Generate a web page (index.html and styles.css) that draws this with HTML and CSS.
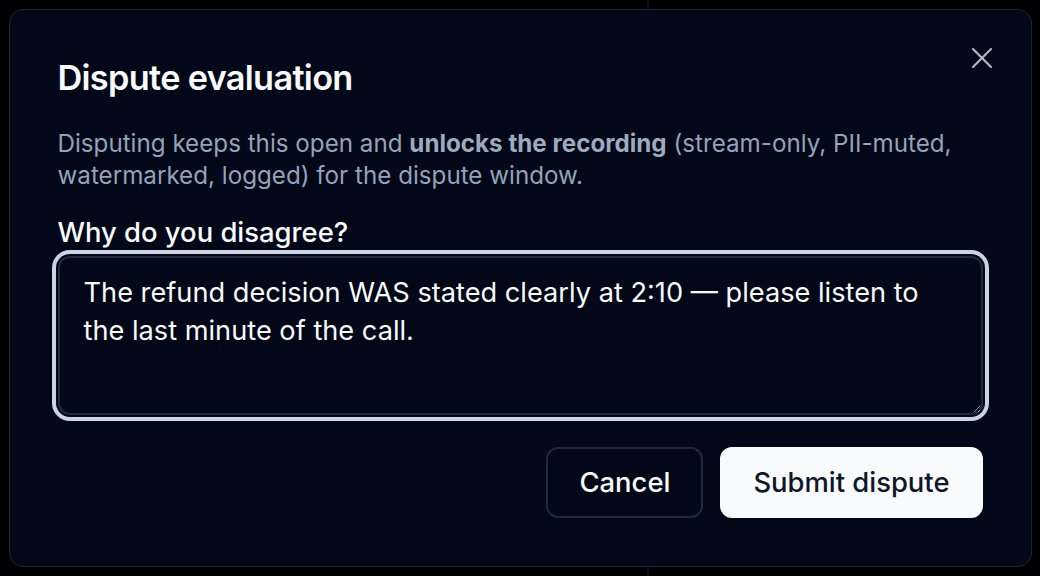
FILE: index.html
```html
<!DOCTYPE html>
<html lang="en">
<head>
<meta charset="utf-8">
<title>Dispute evaluation</title>
<link rel="stylesheet" href="styles.css">
</head>
<body>
<div class="page">
  <div class="page-divider page-divider-top"></div>
  <div class="page-divider page-divider-bottom"></div>
</div>
<div class="overlay">
  <div class="dialog" role="dialog" aria-labelledby="dlg-title">
    <button class="close" type="button" aria-label="Close">
      <svg viewBox="0 0 24 24" width="36" height="36" fill="none" stroke="currentColor" stroke-width="1.4" stroke-linecap="round" stroke-linejoin="round"><path d="M18 6 6 18"/><path d="m6 6 12 12"/></svg>
    </button>
    <h2 class="title" id="dlg-title">Dispute evaluation</h2>
    <p class="desc">Disputing keeps this open and <strong>unlocks the recording</strong> (stream-only, PII-muted, watermarked, logged) for the dispute window.</p>
    <label class="label" for="reason">Why do you disagree?</label>
    <textarea class="field" id="reason">The refund decision WAS stated clearly at 2:10 — please listen to the last minute of the call.</textarea>
    <div class="actions">
      <button class="btn btn-outline" type="button">Cancel</button>
      <button class="btn btn-primary" type="button">Submit dispute</button>
    </div>
  </div>
</div>
</body>
</html>
```

FILE: styles.css
```css
* { box-sizing: border-box; }

html, body {
  margin: 0;
  padding: 0;
  width: 1040px;
  height: 576px;
  overflow: hidden;
  background: #000;
  font-family: Inter, "Noto Sans", "Liberation Sans", sans-serif;
}

.page {
  position: absolute;
  inset: 0;
  background: #000;
}

.page-divider {
  position: absolute;
  left: 647px;
  width: 2px;
  height: 10px;
  background: #0b0d12;
}
.page-divider-top { top: 0; }
.page-divider-bottom { bottom: 0; }

.overlay {
  position: absolute;
  inset: 0;
  display: flex;
  align-items: center;
  justify-content: center;
}

.dialog {
  position: relative;
  width: 1023px;
  height: 558px;
  background: #020817;
  border: 1px solid #1c2536;
  border-radius: 14px;
  padding: 48px;
  display: flex;
  flex-direction: column;
  color: #f8fafc;
}

.close {
  position: absolute;
  top: 30px;
  right: 31px;
  width: 36px;
  height: 36px;
  padding: 0;
  border: 0;
  background: transparent;
  color: #b3b8c1;
  display: flex;
  align-items: center;
  justify-content: center;
}

.title {
  margin: 0;
  font-size: 34.3px;
  line-height: 40px;
  font-weight: 600;
  letter-spacing: -0.02em;
  color: #f8fafc;
}

.desc {
  margin: 30px 0 0;
  font-size: 24.2px;
  line-height: 32px;
  color: #94a3b8;
}
.desc strong {
  font-weight: 700;
  color: #9eabbf;
}

.label {
  margin-top: 22px;
  font-size: 27.4px;
  line-height: 36px;
  font-weight: 500;
  color: #f8fafc;
}

.field {
  margin-top: 6px;
  width: 100%;
  height: 161px;
  padding: 16px 24px;
  border: 2px solid #1e293b;
  border-radius: 12px;
  background: #020817;
  color: #f8fafc;
  font-family: inherit;
  font-size: 27.2px;
  line-height: 38px;
  outline: none;
  box-shadow: 0 0 0 2px #020817, 0 0 0 6px #cbd5e1;
  color-scheme: dark;
  resize: vertical;
}

.actions {
  margin-top: 32px;
  display: flex;
  justify-content: flex-end;
  gap: 17px;
}

.btn {
  height: 71px;
  padding: 0 31px;
  border-radius: 12px;
  font-family: inherit;
  font-size: 27.4px;
  font-weight: 500;
  line-height: 1;
}

.btn-outline {
  background: #020817;
  border: 2px solid #1e293b;
  color: #f8fafc;
}

.btn-primary {
  background: #f8fafc;
  border: 2px solid #f8fafc;
  color: #0f172a;
}
```
